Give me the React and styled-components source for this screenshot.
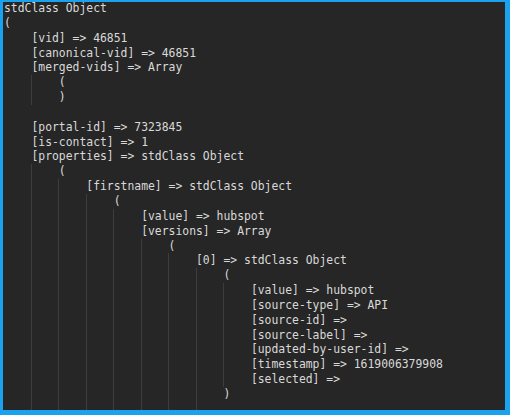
import React from "react";
import styled, { createGlobalStyle } from "styled-components";

const lines = [
  [0, "stdClass Object"],
  [0, "("],
  [4, "[vid] => 46851"],
  [4, "[canonical-vid] => 46851"],
  [4, "[merged-vids] => Array"],
  [8, "("],
  [8, ")"],
  [4, ""],
  [4, "[portal-id] => 7323845"],
  [4, "[is-contact] => 1"],
  [4, "[properties] => stdClass Object"],
  [8, "("],
  [12, "[firstname] => stdClass Object"],
  [16, "("],
  [20, "[value] => hubspot"],
  [20, "[versions] => Array"],
  [24, "("],
  [28, "[0] => stdClass Object"],
  [32, "("],
  [36, "[value] => hubspot"],
  [36, "[source-type] => API"],
  [36, "[source-id] =>"],
  [36, "[source-label] =>"],
  [36, "[updated-by-user-id] =>"],
  [36, "[timestamp] => 1619006379908"],
  [36, "[selected] =>"],
  [32, ")"],
  [32, ""],
];

const App = () => {
  return (
    <>
      <GlobalStyle />
      <Frame>
        <Code>
          {lines.map(([indent, text], i) => (
            <Line key={i} $indent={indent}>
              {text || " "}
            </Line>
          ))}
        </Code>
      </Frame>
    </>
  );
};

export default App;

const GlobalStyle = createGlobalStyle`
  html, body {
    margin: 0;
    padding: 0;
    background: #1aa2ef;
  }
`;

const Frame = styled.div`
  width: 510px;
  height: 415px;
  box-sizing: border-box;
  background: #262626;
  border-style: solid;
  border-color: #1aa2ef;
  border-width: 2px 5px 5px 3px;
  overflow: hidden;
`;

const Code = styled.div`
  margin-top: -1px;
  padding-left: 1px;
  font-family: "DejaVu Sans Mono", "Liberation Mono", monospace;
  font-size: 11.4px;
  line-height: 14.85px;
  color: #d9d9d9;
`;

const Line = styled.div`
  white-space: pre;
  height: 14.85px;
  padding-left: ${(p) => p.$indent}ch;
  background-image: repeating-linear-gradient(
    to right,
    #3d3d3d 0 1px,
    transparent 1px 4ch
  );
  background-repeat: no-repeat;
  background-position: 4ch 0;
  background-size: ${(p) => Math.max(p.$indent - 4, 0)}ch 100%;
`;
